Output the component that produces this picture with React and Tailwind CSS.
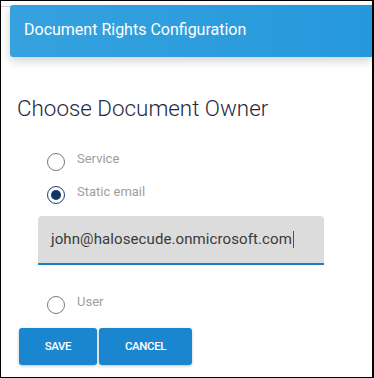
import { useState } from 'react'

function Radio({ checked }) {
  return (
    <span
      className={`flex items-center justify-center w-[18px] h-[18px] rounded-full border-[1.5px] bg-white shrink-0 ${
        checked ? 'border-[#1c3f73]' : 'border-[#7a7a7a]'
      }`}
    >
      {checked && <span className="w-[10px] h-[10px] rounded-full bg-[#143766]" />}
    </span>
  )
}

function Option({ label, checked, onPick }) {
  return (
    <div onClick={onPick} className="flex items-center h-[33px] ml-[29px] cursor-pointer">
      <Radio checked={checked} />
      <span className="ml-[12px] pb-[6px] text-[13px] text-[#9e9e9e]">{label}</span>
    </div>
  )
}

export default function App() {
  const [owner, setOwner] = useState('static')

  return (
    <div
      className="relative w-[374px] h-[378px] bg-white border border-black border-r-2 overflow-hidden"
      style={{ fontFamily: 'Roboto, "Liberation Sans", sans-serif' }}
    >
      {/* faint card edge behind header */}
      <div className="absolute left-0 right-0 top-[5px] h-px bg-[#d6d6d6]" />

      {/* Header */}
      <div className="relative pt-[4px] pl-[9px]">
        <div className="h-[52px] flex items-center pl-[14px] rounded-l-[3px] bg-gradient-to-r from-[#35a2de] to-[#2598dc] shadow-[0_4px_10px_rgba(0,0,0,0.18)]">
          <span className="text-white text-[16px] pb-[2px]">Document Rights Configuration</span>
        </div>
      </div>

      {/* Body */}
      <div className="pl-[17px]">
        <h2 className="mt-[37px] text-[22.4px] leading-[28px] font-light text-[#1f2940] -ml-[1px]">
          Choose Document Owner
        </h2>

        <div className="mt-[23px]">
          <Option label="Service" checked={owner === 'service'} onPick={() => setOwner('service')} />
          <Option label="Static email" checked={owner === 'static'} onPick={() => setOwner('static')} />
        </div>

        <div className="mt-[5px] ml-[20px] w-[286px] h-[49px] bg-[#dcdcdc] rounded-t-[4px] border-b-2 border-[#1a7fc4] flex items-center pl-[13px]">
          <span className="text-[15px] text-[#3a3a3a] tracking-[0.1px]">john@halosecude.onmicrosoft.com</span>
          <span className="ml-[1px] w-px h-[17px] bg-[#1f5f99]" />
        </div>

        <div className="mt-[23px]">
          <Option label="User" checked={owner === 'user'} onPick={() => setOwner('user')} />
        </div>

        <div className="mt-[7px] ml-[1px] flex gap-[2px]">
          <button className="w-[78px] h-[37px] rounded-[3px] bg-[#1a86cf] text-white text-[11.5px] font-medium tracking-[-0.4px] shadow-[0_1px_3px_rgba(0,0,0,0.25)]">
            SAVE
          </button>
          <button className="w-[93px] h-[37px] rounded-[3px] bg-[#1a86cf] text-white text-[11.5px] font-medium tracking-[-0.4px] shadow-[0_1px_3px_rgba(0,0,0,0.25)]">
            CANCEL
          </button>
        </div>
      </div>
    </div>
  )
}
